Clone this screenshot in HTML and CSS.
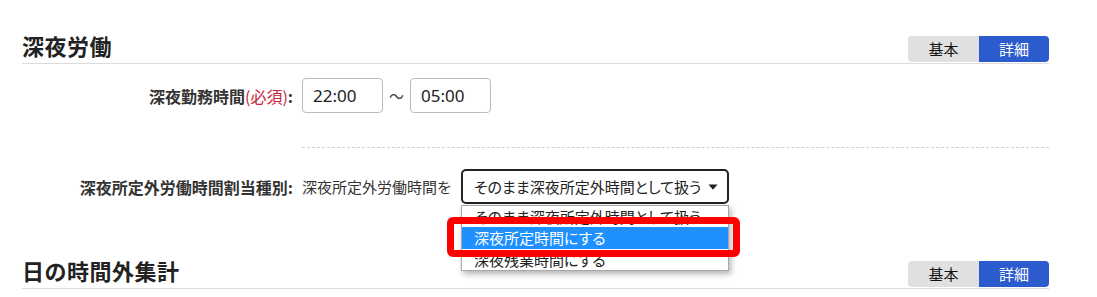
FILE: index.html
```html
<!DOCTYPE html>
<html lang="ja">
<head>
<meta charset="utf-8">
<link rel="stylesheet" href="styles.css">
</head>
<body>
<div class="page">
  <section class="sec sec-first">
    <div class="sec-head">
      <h2 class="sec-title">深夜労働</h2>
      <div class="toggle">
        <span class="tg tg-basic">基本</span>
        <span class="tg tg-detail">詳細</span>
      </div>
    </div>
    <div class="row row-time">
      <div class="label">深夜勤務時間<span class="req">(必須)</span>:</div>
      <div class="field">
        <div class="tbox">22:00</div>
        <span class="tilde">～</span>
        <div class="tbox">05:00</div>
      </div>
    </div>
    <div class="dash"></div>
    <div class="row row-kind">
      <div class="label">深夜所定外労働時間割当種別:</div>
      <div class="field">
        <span class="pre">深夜所定外労働時間を</span>
        <div class="select-wrap">
          <div class="select">
            <span class="sel-text">そのまま深夜所定外時間として扱う</span>
            <svg class="caret" width="10" height="6" viewBox="0 0 10 6"><path d="M0.5 0.5 H9.5 L5 5.8 Z" fill="#222"/></svg>
          </div>
          <div class="list">
            <div class="opt opt-1">そのまま深夜所定外時間として扱う</div>
            <div class="opt opt-2 active">深夜所定時間にする</div>
            <div class="opt opt-3">深夜残業時間にする</div>
          </div>
          <div class="mark"></div>
        </div>
      </div>
    </div>
  </section>
  <section class="sec">
    <div class="sec-head">
      <h2 class="sec-title">日の時間外集計</h2>
      <div class="toggle">
        <span class="tg tg-basic">基本</span>
        <span class="tg tg-detail">詳細</span>
      </div>
    </div>
  </section>
</div>
</body>
</html>
```

FILE: styles.css
```css
* { box-sizing: border-box; }
html, body { margin: 0; padding: 0; background: #fff; }
body {
  font-family: "Noto Sans CJK JP", "Noto Sans", sans-serif;
  color: #333;
  width: 1097px;
  height: 297px;
  overflow: hidden;
}
.page {
  width: 1049px;
  padding-left: 22px;
}
.sec-head {
  display: flex;
  justify-content: space-between;
  align-items: flex-start;
  padding-top: 34px;
  height: 64px;
  border-bottom: 1px solid #dcdcdc;
}
.sec-title {
  margin: 0;
  font-size: 22px;
  line-height: 22px;
  font-weight: bold;
  color: #222;
  letter-spacing: 0.5px;
}
.toggle {
  display: flex;
  margin-top: 2px;
  height: 26px;
  border-radius: 4px;
  overflow: hidden;
}
.tg {
  display: block;
  font-size: 15px;
  line-height: 26px;
  text-align: center;
}
.tg-basic { width: 71px; background: #e0e0e0; color: #111; }
.tg-detail { width: 70px; background: #2b5bcc; color: #fff; }

.row {
  display: flex;
  align-items: center;
  height: 35px;
}
.row-time { margin-top: 14px; }
.label {
  width: 273px;
  flex: none;
  text-align: right;
  font-size: 16px;
  font-weight: bold;
  color: #333;
  padding-right: 2px;
}
.req { color: #c8283c; font-weight: normal; }
.field {
  display: flex;
  align-items: center;
  margin-left: 7px;
}
.tbox {
  width: 81px;
  height: 35px;
  border: 1px solid #bdbdbd;
  border-radius: 4px;
  padding-left: 10px;
  font-family: "Noto Sans", sans-serif;
  font-size: 17px;
  line-height: 33px;
  color: #222;
}
.tilde {
  width: 27px;
  text-align: center;
  font-size: 15px;
  color: #444;
}
.dash {
  margin-top: 34px;
  margin-left: 280px;
  border-top: 1px dashed #cfcfcf;
}
.row-kind { margin-top: 21px; margin-bottom: 21px; }
.pre {
  font-size: 15px;
  color: #333;
  width: 159px;
}
.select-wrap {
  position: relative;
  width: 268px;
  height: 35px;
}
.select {
  display: flex;
  align-items: center;
  justify-content: space-between;
  width: 268px;
  height: 35px;
  border: 2px solid #222;
  border-radius: 5px;
  padding: 0 9px 0 11px;
  font-size: 15px;
  color: #222;
}
.sel-text, .opt { font-feature-settings: "palt"; }
.caret { display: block; }
.list {
  position: absolute;
  left: 0;
  top: 36px;
  width: 268px;
  background: #fff;
  border: 1px solid #a8a8a8;
  box-shadow: 2px 3px 6px rgba(0, 0, 0, 0.3);
}
.opt {
  height: 21px;
  line-height: 21px;
  padding-left: 12px;
  font-size: 15px;
  color: #222;
  white-space: nowrap;
}
.opt.active { background: #1e90ff; color: #fff; height: 22px; line-height: 22px; }
.mark {
  position: absolute;
  left: -14px;
  top: 48px;
  width: 293px;
  height: 40px;
  border: 7px solid #ff0000;
  border-radius: 6px;
}
```
